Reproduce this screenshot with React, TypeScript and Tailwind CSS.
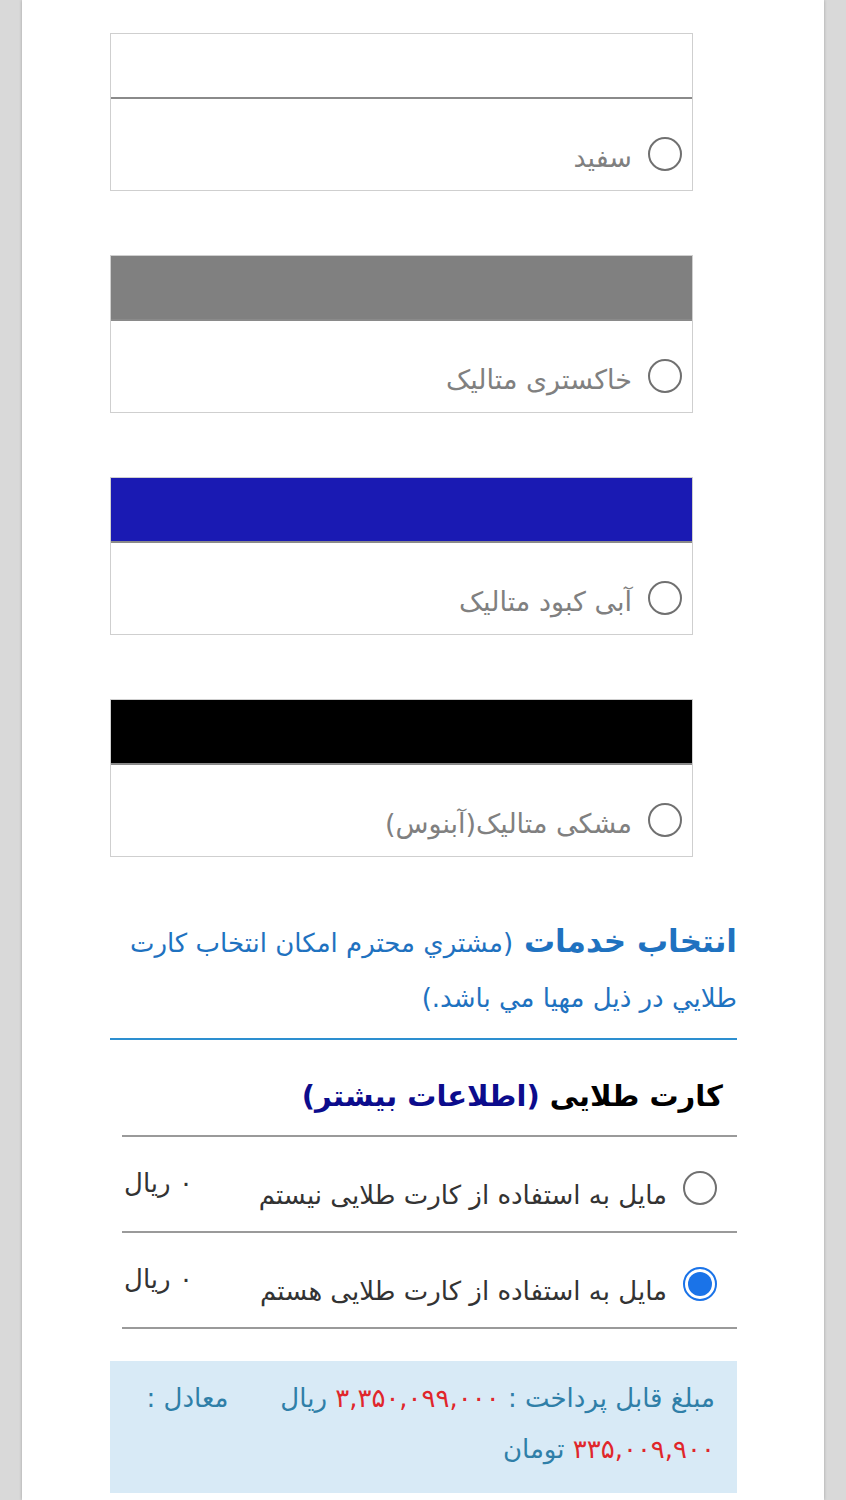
import React from "react";

type Color = {
  label: string;
  swatch: string;
};

const COLORS: Color[] = [
  { label: "سفید", swatch: "bg-white" },
  { label: "خاکستری متالیک", swatch: "bg-[#808080]" },
  { label: "آبی کبود متالیک", swatch: "bg-[#1a1ab3]" },
  { label: "مشکی متالیک(آبنوس)", swatch: "bg-black" },
];

const OPTIONS = [
  { label: "مایل به استفاده از کارت طلایی نیستم", price: "۰ ریال", checked: false },
  { label: "مایل به استفاده از کارت طلایی هستم", price: "۰ ریال", checked: true },
];

function Radio({ checked }: { checked: boolean }) {
  if (checked) {
    return (
      <span className="flex h-[34px] w-[34px] shrink-0 items-center justify-center rounded-full border-[2px] border-[#1a73e8] bg-white">
        <span className="h-[24px] w-[24px] rounded-full bg-[#1a73e8]" />
      </span>
    );
  }
  return (
    <span className="block h-[34px] w-[34px] shrink-0 rounded-full border-[2px] border-[#707070] bg-white" />
  );
}

function ColorBox({ color }: { color: Color }) {
  return (
    <div className="mr-[44px] w-[583px] border border-[#cfcfcf]">
      <div className={`h-[65px] border-b-[2px] border-[#8a8a8a] ${color.swatch}`} />
      <div className="flex h-[91px] items-start gap-[16px] pr-[10px] pt-[38px]">
        <Radio checked={false} />
        <span className="mt-[1px] text-[27px] leading-[40px] text-[#808080]">{color.label}</span>
      </div>
    </div>
  );
}

export default function App() {
  return (
    <div
      dir="rtl"
      className="min-h-[1500px] bg-[#d9d9d9] px-[22px]"
      style={{ fontFamily: '"DejaVu Sans", "Noto Sans", sans-serif' }}
    >
      <div className="mx-auto min-h-[1500px] w-[802px] bg-white shadow-[0_0_3px_rgba(0,0,0,0.25)]">
        <div className="mr-[87px] w-[627px] pt-[33px]">
          <div className="flex flex-col gap-[64px]">
            {COLORS.map((c) => (
              <ColorBox key={c.label} color={c} />
            ))}
          </div>

          <div className="mt-[57px] border-b-[2px] border-[#2d8fd0] pb-[12px]">
            <p className="text-[26px] leading-[55px] text-[#1f72c0]">
              <span className="text-[31px] font-bold">انتخاب خدمات </span>
              (مشتري محترم امكان انتخاب كارت طلايي در ذيل مهيا مي باشد.)
            </p>
          </div>

          <div className="ml-[12px]">
            <h2 className="pb-[14px] pr-[14px] pt-[31px] text-[29px] font-bold leading-[50px] text-black">
              کارت طلایی <span className="text-[#0c0c8c]">(اطلاعات بیشتر)</span>
            </h2>
            <div className="border-t-[2px] border-[#9a9a9a]">
              {OPTIONS.map((o) => (
                <div
                  key={o.label}
                  className="flex h-[96px] items-start justify-between border-b-[2px] border-[#9a9a9a] pr-[20px] pl-[2px] pt-[32px]"
                >
                  <div className="flex items-start gap-[16px]">
                    <span className="mt-[2px]">
                      <Radio checked={o.checked} />
                    </span>
                    <span className="mt-[6px] text-[26px] leading-[40px] text-[#333333]">{o.label}</span>
                  </div>
                  <span className="mt-[-6px] text-[26px] leading-[40px] text-[#333333]">{o.price}</span>
                </div>
              ))}
            </div>
          </div>

          <div className="mt-[32px] h-[132px] bg-[#d8eaf6] px-[22px] pt-[12px]">
            <p className="text-[26px] leading-[51px] text-[#2f7fa8]">
              مبلغ قابل پرداخت : <span className="text-[#e0262b]">۳,۳۵۰,۰۹۹,۰۰۰</span> ریال
              <span className="inline-block w-[52px]" />
              معادل : <span className="text-[#e0262b]">۳۳۵,۰۰۹,۹۰۰</span> تومان
            </p>
          </div>
        </div>
      </div>
    </div>
  );
}
